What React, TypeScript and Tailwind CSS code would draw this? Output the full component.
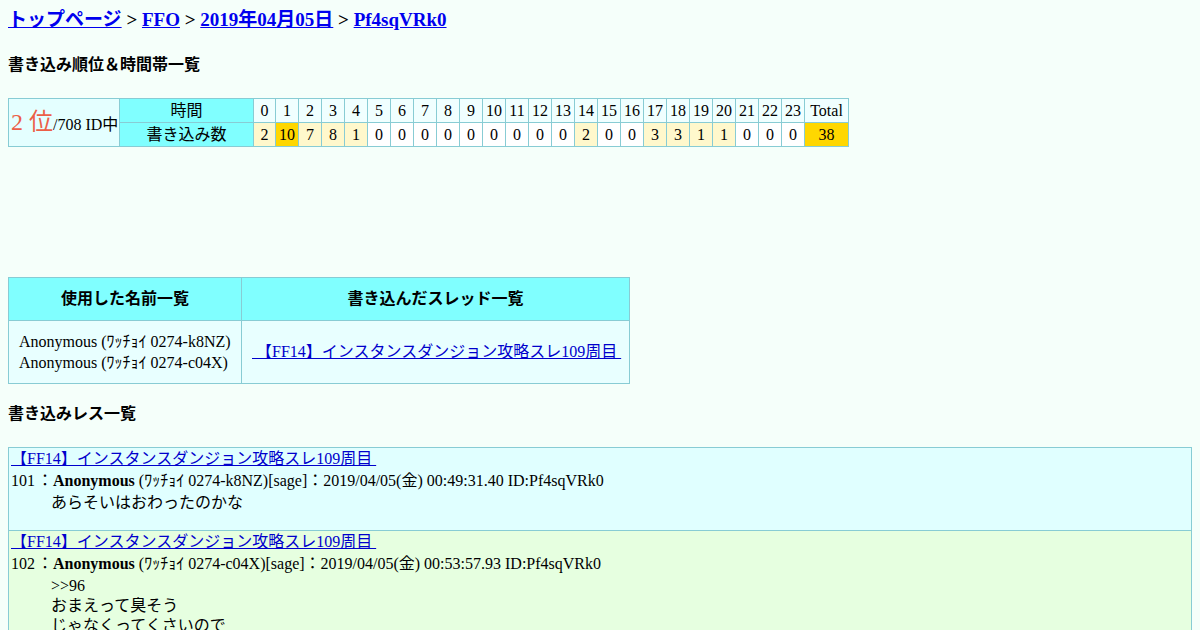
import React from 'react';

const hours = Array.from({ length: 24 }, (_, i) => i);
const counts = [2, 10, 7, 8, 1, 0, 0, 0, 0, 0, 0, 0, 0, 0, 2, 0, 0, 3, 3, 1, 1, 0, 0, 0];

const threadTitle = '【FF14】インスタンスダンジョン攻略スレ109周目';

function countBg(n: number) {
  if (n >= 10) return 'bg-[#ffd700]';
  if (n > 0) return 'bg-[#fff8cc]';
  return 'bg-white';
}

const posts = [
  {
    no: 101,
    trip: '(ﾜｯﾁｮｲ 0274-k8NZ)[sage]：2019/04/05(金) 00:49:31.40 ID:Pf4sqVRk0',
    body: ['あらそいはおわったのかな'],
    bg: 'bg-[#e0ffff]',
  },
  {
    no: 102,
    trip: '(ﾜｯﾁｮｲ 0274-c04X)[sage]：2019/04/05(金) 00:53:57.93 ID:Pf4sqVRk0',
    body: ['>>96', 'おまえって臭そう', 'じゃなくってくさいので'],
    bg: 'bg-[#e6ffe0]',
  },
];

export default function App() {
  return (
    <div className="min-h-screen bg-[#f5fffa] p-2 text-black font-['Liberation_Serif','Noto_Sans_CJK_JP',serif] text-base">
      {/* Breadcrumb */}
      <div className="text-[19px] font-bold leading-6">
        <a href="#" className="text-[#0000ee] underline">トップページ</a>
        {' > '}
        <a href="#" className="text-[#0000ee] underline">FFO</a>
        {' > '}
        <a href="#" className="text-[#0000ee] underline">2019年04月05日</a>
        {' > '}
        <a href="#" className="text-[#0000ee] underline">Pf4sqVRk0</a>
      </div>

      <h2 className="mt-[23px] font-bold leading-5">書き込み順位＆時間帯一覧</h2>

      {/* Hour table */}
      <table className="mt-[23px] w-[840px] table-fixed border-collapse leading-[23px]">
        <colgroup>
          <col className="w-[111px]" />
          <col className="w-[134px]" />
          {hours.map((h) => (
            <col key={h} className={h === 0 ? 'w-[22px]' : 'w-[23px]'} />
          ))}
          <col className="w-[44px]" />
        </colgroup>
        <tbody>
          <tr>
            <td rowSpan={2} className="border border-[#88ccd4] bg-[#e4ffff] px-[2px] pt-[2px] whitespace-nowrap">
              <span className="text-[24px] text-[#ec5f48]">2 位</span>/708 ID中
            </td>
            <td className="border border-[#88ccd4] bg-[#80ffff] text-center">時間</td>
            {hours.map((h) => (
              <td key={h} className="border border-[#88ccd4] bg-[#f0ffff] text-center px-0">
                {h}
              </td>
            ))}
            <td className="border border-[#88ccd4] bg-[#f0ffff] text-center">Total</td>
          </tr>
          <tr>
            <td className="border border-[#88ccd4] bg-[#80ffff] text-center">書き込み数</td>
            {counts.map((c, i) => (
              <td key={i} className={`border border-[#88ccd4] text-center px-0 ${countBg(c)}`}>
                {c}
              </td>
            ))}
            <td className="border border-[#88ccd4] bg-[#ffd700] text-center">38</td>
          </tr>
        </tbody>
      </table>

      {/* Names / threads */}
      <table className="mt-[130px] w-[621px] table-fixed border-collapse">
        <colgroup>
          <col className="w-[233px]" />
          <col className="w-[388px]" />
        </colgroup>
        <thead>
          <tr className="h-[43px]">
            <th className="border border-[#88ccd4] bg-[#80ffff] font-bold">使用した名前一覧</th>
            <th className="border border-[#88ccd4] bg-[#80ffff] font-bold">書き込んだスレッド一覧</th>
          </tr>
        </thead>
        <tbody>
          <tr className="h-[63px]">
            <td className="border border-[#88ccd4] bg-[#e8ffff] px-[10px] leading-[21px] whitespace-nowrap">
              Anonymous (ﾜｯﾁｮｲ 0274-k8NZ)
              <br />
              Anonymous (ﾜｯﾁｮｲ 0274-c04X)
            </td>
            <td className="border border-[#88ccd4] bg-[#e8ffff] px-[10px]">
              <a href="#" className="text-[#0000cc] underline whitespace-nowrap">
                {'\u00a0' + threadTitle + '\u00a0'}
              </a>
            </td>
          </tr>
        </tbody>
      </table>

      <h2 className="mt-5 font-bold leading-5">書き込みレス一覧</h2>

      {/* Posts */}
      <div className="mt-[23px] border border-[#88ccd4]">
        {posts.map((p, idx) => (
          <div key={p.no} className={`${p.bg} pb-[17px] px-[2px] ${idx > 0 ? 'border-t border-[#88ccd4]' : ''}`}>
            <div className="leading-[21px]">
              <a href="#" className="text-[#0000cc] underline">
                {threadTitle + '\u00a0'}
              </a>
            </div>
            <div className="leading-[23px] whitespace-nowrap">
              {p.no} <span className="-ml-[2px]">：</span><b>Anonymous</b> {p.trip}
            </div>
            <div className="ml-10 leading-5 pt-[1px]">
              {p.body.map((line, i) => (
                <div key={i}>{line}</div>
              ))}
            </div>
          </div>
        ))}
      </div>
    </div>
  );
}
